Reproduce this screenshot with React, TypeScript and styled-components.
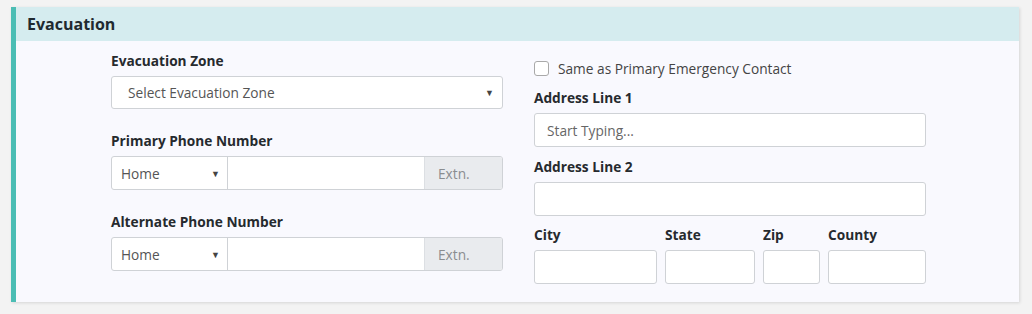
import React from 'react'
import styled, { createGlobalStyle } from 'styled-components'

const GlobalStyle = createGlobalStyle`
  html, body {
    margin: 0;
    padding: 0;
    background: #f3f3f3;
    font-family: "Open Sans", "Noto Sans", sans-serif;
  }
`

const Page = styled.div`
  padding: 7px 13px 12px 11px;
`

const Card = styled.section`
  width: 1008px;
  box-sizing: border-box;
  border-left: 5px solid #4bbdb4;
  background: #f9f9fe;
  box-shadow: 1px 1px 3px rgba(0, 0, 0, 0.12);
`

const CardHeader = styled.header`
  height: 34px;
  display: flex;
  align-items: center;
  padding-left: 11px;
  background: #d5ecef;
`

const Title = styled.h2`
  margin: 0;
  font-size: 16px;
  font-weight: 700;
  color: #1f2a30;
`

const CardBody = styled.div`
  display: grid;
  grid-template-columns: 392px 392px;
  column-gap: 31px;
  padding: 0 0 18px 95px;
  height: 261px;
  box-sizing: border-box;
`

const Column = styled.div<{ $top: number }>`
  display: flex;
  flex-direction: column;
  padding-top: ${p => p.$top}px;
`

const Field = styled.div<{ $gap: number }>`
  display: flex;
  flex-direction: column;
  margin-bottom: ${p => p.$gap}px;
  min-width: 0;
`

const Label = styled.label`
  font-size: 13.7px;
  line-height: 18px;
  font-weight: 700;
  color: #262a2e;
  margin-bottom: 6px;
`

const CheckRow = styled.label`
  display: flex;
  align-items: center;
  gap: 9px;
  height: 18px;
  margin-bottom: 12px;
  font-size: 13.7px;
  color: #444;
`

const Box = styled.span`
  width: 13px;
  height: 13px;
  border: 1px solid #a9a9a9;
  border-radius: 3px;
  background: #fff;
`

const Select = styled.div<{ $pad: number; $h: number }>`
  height: ${p => p.$h}px;
  box-sizing: border-box;
  display: flex;
  align-items: center;
  justify-content: space-between;
  padding: 0 8px 0 ${p => p.$pad}px;
  border: 1px solid #cfd2d6;
  border-radius: 3px;
  background: #fff;
  font-size: 13.7px;
  color: #555;
`

const Caret = styled.span`
  font-size: 9px;
  color: #444;
`

const Group = styled.div`
  display: flex;
  height: 34px;
  border: 1px solid #cfd2d6;
  border-radius: 3px;
  overflow: hidden;
  box-sizing: border-box;
  background: #fff;
`

const GroupSelect = styled.div`
  width: 116px;
  display: flex;
  align-items: center;
  justify-content: space-between;
  padding: 0 7px 0 9px;
  box-sizing: border-box;
  border-right: 1px solid #cfd2d6;
  font-size: 13.7px;
  color: #555;
`

const GroupInput = styled.div`
  flex: 1;
`

const Addon = styled.div`
  width: 78px;
  display: flex;
  align-items: center;
  padding-left: 13px;
  box-sizing: border-box;
  background: #e9ebee;
  border-left: 1px solid #dcdfe3;
  font-size: 13.7px;
  color: #8a8d90;
`

const TextInput = styled.div`
  height: 34px;
  box-sizing: border-box;
  display: flex;
  align-items: center;
  padding: 0 12px;
  border: 1px solid #cfd2d6;
  border-radius: 3px;
  background: #fff;
  font-size: 13.7px;
  color: #666;
`

const AddressRow = styled.div`
  display: grid;
  grid-template-columns: 123px 90px 57px 98px;
  column-gap: 8px;
`

const PhoneField = ({ label, gap }: { label: string; gap: number }) => (
  <Field $gap={gap}>
    <Label>{label}</Label>
    <Group>
      <GroupSelect>
        Home <Caret>▼</Caret>
      </GroupSelect>
      <GroupInput />
      <Addon>Extn.</Addon>
    </Group>
  </Field>
)

const App = () => (
  <>
    <GlobalStyle />
    <Page>
      <Card>
        <CardHeader>
          <Title>Evacuation</Title>
        </CardHeader>
        <CardBody>
          <Column $top={11}>
            <Field $gap={23}>
              <Label>Evacuation Zone</Label>
              <Select $pad={16} $h={33}>
                Select Evacuation Zone <Caret>▼</Caret>
              </Select>
            </Field>
            <PhoneField label="Primary Phone Number" gap={23} />
            <PhoneField label="Alternate Phone Number" gap={0} />
          </Column>
          <Column $top={18}>
            <CheckRow>
              <Box />
              Same as Primary Emergency Contact
            </CheckRow>
            <Field $gap={11}>
              <Label>Address Line 1</Label>
              <TextInput>Start Typing...</TextInput>
            </Field>
            <Field $gap={10}>
              <Label>Address Line 2</Label>
              <TextInput />
            </Field>
            <AddressRow>
              {['City', 'State', 'Zip', 'County'].map(name => (
                <Field $gap={0} key={name}>
                  <Label>{name}</Label>
                  <TextInput />
                </Field>
              ))}
            </AddressRow>
          </Column>
        </CardBody>
      </Card>
    </Page>
  </>
)

export default App
